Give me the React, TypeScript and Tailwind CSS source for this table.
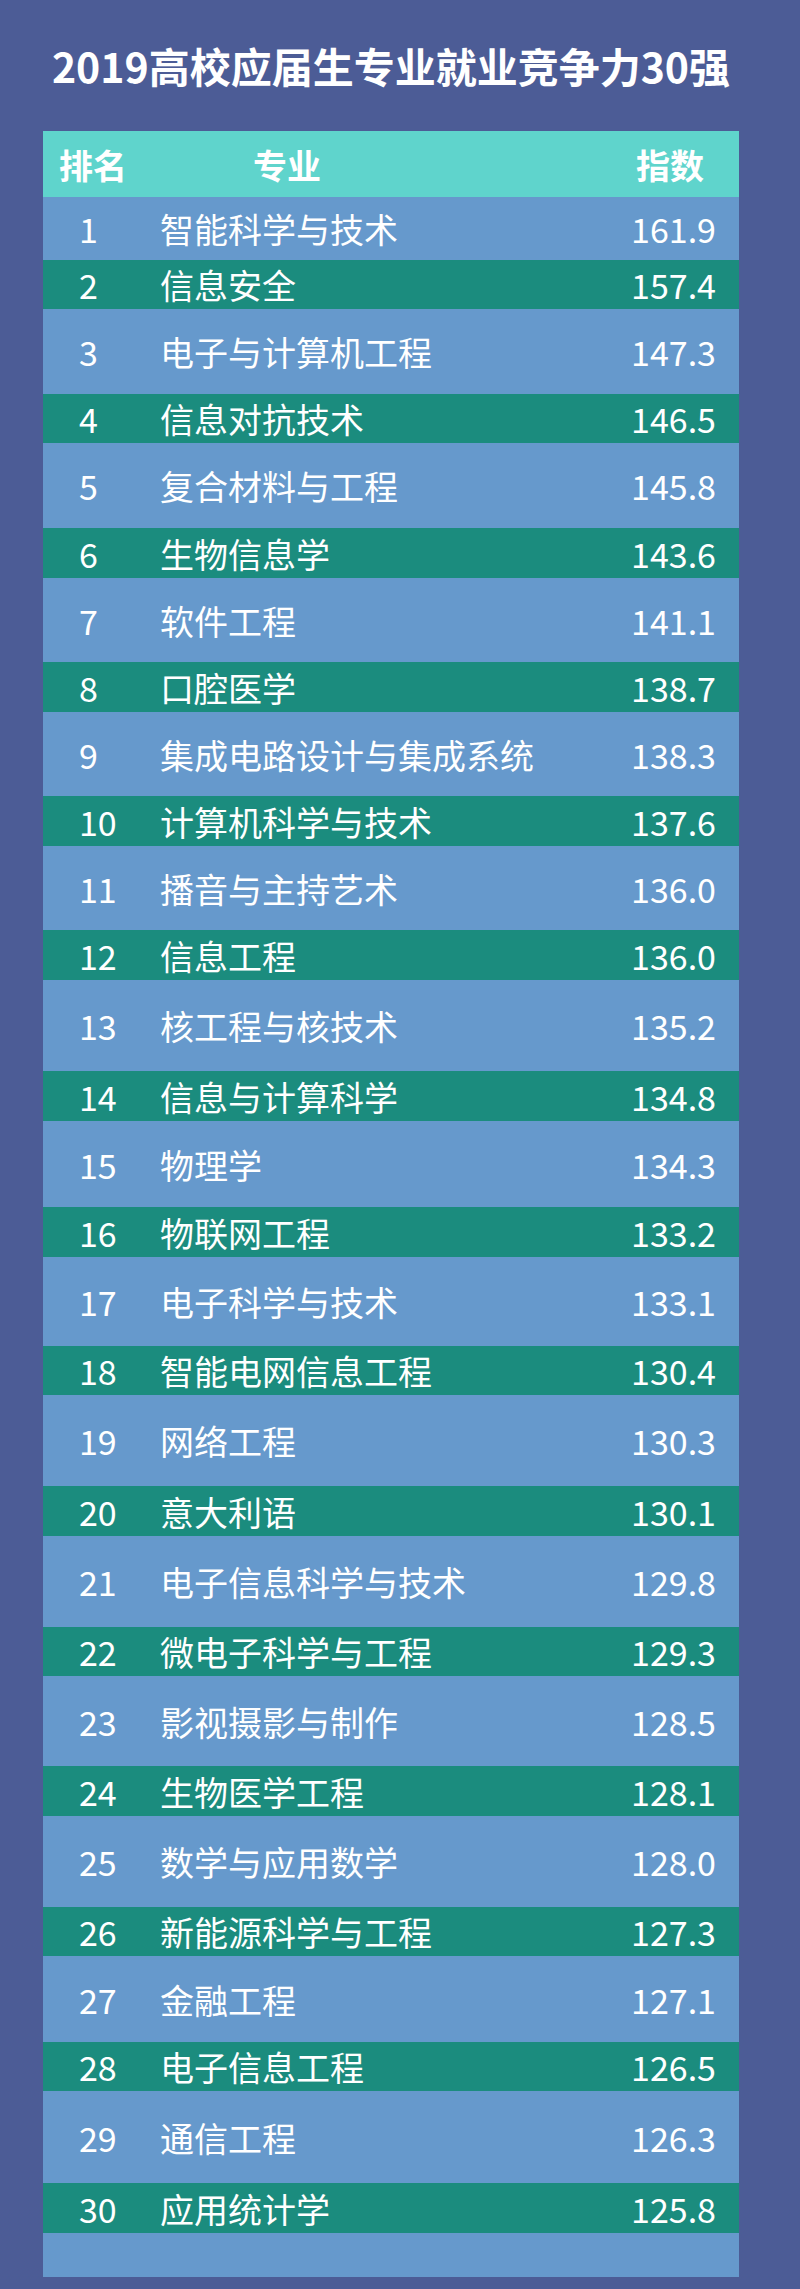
import React from "react";

type Row = { rank: number; name: string; score: string; h: string; green: boolean };

const rows: Row[] = [
  { rank: 1, name: "智能科学与技术", score: "161.9", h: "h-[63px]", green: false },
  { rank: 2, name: "信息安全", score: "157.4", h: "h-[49px]", green: true },
  { rank: 3, name: "电子与计算机工程", score: "147.3", h: "h-[85px]", green: false },
  { rank: 4, name: "信息对抗技术", score: "146.5", h: "h-[49px]", green: true },
  { rank: 5, name: "复合材料与工程", score: "145.8", h: "h-[85px]", green: false },
  { rank: 6, name: "生物信息学", score: "143.6", h: "h-[50px]", green: true },
  { rank: 7, name: "软件工程", score: "141.1", h: "h-[84px]", green: false },
  { rank: 8, name: "口腔医学", score: "138.7", h: "h-[50px]", green: true },
  { rank: 9, name: "集成电路设计与集成系统", score: "138.3", h: "h-[84px]", green: false },
  { rank: 10, name: "计算机科学与技术", score: "137.6", h: "h-[50px]", green: true },
  { rank: 11, name: "播音与主持艺术", score: "136.0", h: "h-[84px]", green: false },
  { rank: 12, name: "信息工程", score: "136.0", h: "h-[50px]", green: true },
  { rank: 13, name: "核工程与核技术", score: "135.2", h: "h-[91px]", green: false },
  { rank: 14, name: "信息与计算科学", score: "134.8", h: "h-[50px]", green: true },
  { rank: 15, name: "物理学", score: "134.3", h: "h-[86px]", green: false },
  { rank: 16, name: "物联网工程", score: "133.2", h: "h-[50px]", green: true },
  { rank: 17, name: "电子科学与技术", score: "133.1", h: "h-[89px]", green: false },
  { rank: 18, name: "智能电网信息工程", score: "130.4", h: "h-[49px]", green: true },
  { rank: 19, name: "网络工程", score: "130.3", h: "h-[91px]", green: false },
  { rank: 20, name: "意大利语", score: "130.1", h: "h-[50px]", green: true },
  { rank: 21, name: "电子信息科学与技术", score: "129.8", h: "h-[91px]", green: false },
  { rank: 22, name: "微电子科学与工程", score: "129.3", h: "h-[49px]", green: true },
  { rank: 23, name: "影视摄影与制作", score: "128.5", h: "h-[90px]", green: false },
  { rank: 24, name: "生物医学工程", score: "128.1", h: "h-[50px]", green: true },
  { rank: 25, name: "数学与应用数学", score: "128.0", h: "h-[91px]", green: false },
  { rank: 26, name: "新能源科学与工程", score: "127.3", h: "h-[49px]", green: true },
  { rank: 27, name: "金融工程", score: "127.1", h: "h-[86px]", green: false },
  { rank: 28, name: "电子信息工程", score: "126.5", h: "h-[49px]", green: true },
  { rank: 29, name: "通信工程", score: "126.3", h: "h-[92px]", green: false },
  { rank: 30, name: "应用统计学", score: "125.8", h: "h-[50px]", green: true },
];

const font = { fontFamily: '"Noto Sans CJK SC", "Noto Sans", sans-serif' };

export default function App() {
  return (
    <div className="min-h-[2289px] w-[800px] bg-[#4c5c96] text-white" style={font}>
      <div className="ml-[43px] w-[696px] pt-[40px] pb-[12px]">
        <h1 className="h-[51px] text-center text-[41px] font-bold leading-[51px] tracking-normal">
          2019高校应届生专业就业竞争力30强
        </h1>
        <div className="mt-[40px] flex flex-col">
          <div className="flex h-[66px] items-center bg-[#5fd4cc] pl-[16px] pr-[35px] text-[34px] font-bold">
            <span className="w-[68px]">排名</span>
            <span className="ml-[126px]">专业</span>
            <span className="ml-auto">指数</span>
          </div>
          {rows.map((r) => (
            <div
              key={r.rank}
              className={`flex items-center pl-[36px] pr-[23px] text-[34px] ${r.h} ${
                r.green ? "bg-[#1b8c7e]" : "bg-[#6699cc]"
              }`}
            >
              <span className="w-[81px]">{r.rank}</span>
              <span>{r.name}</span>
              <span className="ml-auto">{r.score}</span>
            </div>
          ))}
          <div className="h-[44px] bg-[#6699cc]" />
        </div>
      </div>
    </div>
  );
}
